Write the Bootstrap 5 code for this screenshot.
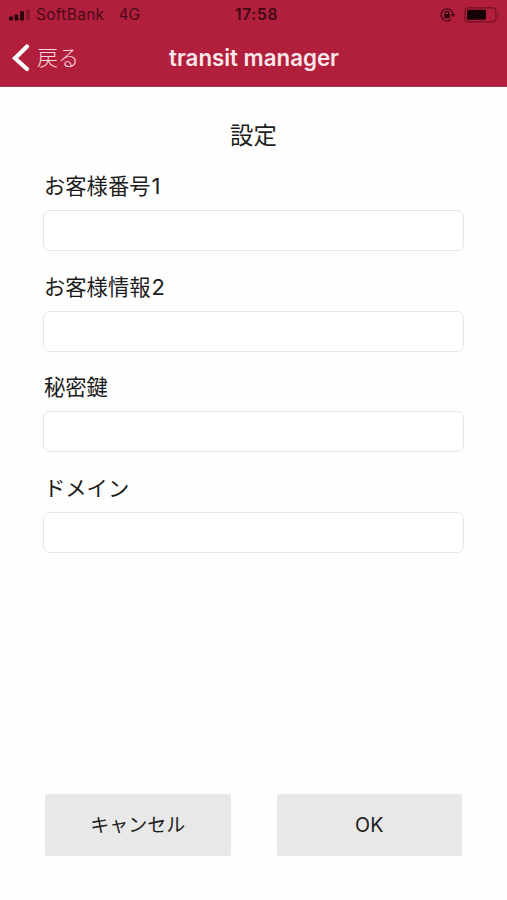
<!DOCTYPE html>
<html lang="ja">
<head>
<meta charset="utf-8">
<meta name="viewport" content="width=device-width, initial-scale=1">
<title>transit manager</title>
<link href="https://cdn.jsdelivr.net/npm/bootstrap@5.3.0/dist/css/bootstrap.min.css" rel="stylesheet">
<style>
  body { font-family: Inter, "Noto Sans CJK JP", sans-serif; background: #fefefe; color: #1c1c1c; }
  .app-head { background: #b21f3c; height: 87px; border-bottom: 1px solid #a8354a; }
  .status { height: 30px; color: #4a0a18; font-size: 15.5px; line-height: 30px; padding: 0 6px 0 8px; }
  .status-side { flex: 1 1 0; }
  .carrier { letter-spacing: .3px; }
  .network { margin-left: 14px; }
  .clock { font-weight: 600; font-size: 15.5px; letter-spacing: .7px; color: #3d0812; padding-left: 4px; }
  .titlebar { height: 56px; padding: 0 11px; line-height: 30px; color: #fbe6ea; }
  .title-side { flex: 1 1 0; }
  .back { color: #f9d5dc; font-size: 21px; line-height: 30px; }
  .back-text { padding-left: 2px; font-weight: 300; }
  .app-title { font-size: 22.3px; font-weight: 600; letter-spacing: 0; padding-left: 1px; }
  .settings { padding: 32px 43px 44px 43px; }
  .heading { font-size: 23.4px; line-height: 34px; }
  .fields { padding-top: 2px; }
  .field { height: 100.5px; }
  .field .form-label { font-size: 21.3px; line-height: 30px; height: 39px; padding-left: 1px; }
  .field .form-control { height: 41px; border: 1.5px solid #e6e6e6; border-radius: 7px; background: #fff; }
  .latin { font-size: 22px; padding-left: 1px; }
  .actions { gap: 46px; padding: 0 2px 0 2px; }
  .actions .btn { height: 62px; border-radius: 2px; background: #e8e8e8; color: #1c1c1c; font-size: 19px; padding-top: 8px; }
  .actions .ok { font-size: 19.7px; }
</style>
</head>
<body>
<div class="d-flex flex-column vh-100 overflow-hidden">
  <header class="app-head flex-shrink-0">
    <div class="status d-flex align-items-center">
      <div class="status-side d-flex align-items-center">
        <svg width="24" height="14" viewBox="0 0 24 14" fill="#2b040c">
          <rect x="1" y="8.5" width="4" height="4" rx="1"/>
          <rect x="6.5" y="6.5" width="4" height="6" rx="1"/>
          <rect x="12" y="3" width="4" height="9.5" rx="1"/>
          <rect x="18" y="1.5" width="4" height="11" rx="1" opacity=".3"/>
        </svg>
        <span class="carrier ms-1">SoftBank</span>
        <span class="network">4G</span>
      </div>
      <div class="clock">17:58</div>
      <div class="status-side d-flex align-items-center justify-content-end gap-2">
        <svg width="17" height="16" viewBox="0 0 17 16" fill="none" stroke="#4a0a18" stroke-width="1.4">
          <path d="M12.2 12.2A6 6 0 1 1 14 7.5"/>
          <path d="M11.7 7h4.6L14 10.2z" fill="#4a0a18" stroke="none"/>
          <rect x="5.2" y="7" width="5.6" height="4.2" rx=".6" fill="#2b040c" stroke="none"/>
          <path d="M6.3 7.2V6a1.7 1.7 0 0 1 3.4 0v1.2" stroke="#2b040c" stroke-width="1.2"/>
        </svg>
        <svg width="37" height="16" viewBox="0 0 37 16">
          <rect x="1" y=".8" width="31" height="14" rx="3.5" fill="none" stroke="#700f24" stroke-width="1.3"/>
          <rect x="3" y="2.8" width="19" height="10" rx="1.5" fill="#170006"/>
          <path d="M34 5.5q2 2.3 0 4.6z" fill="#700f24"/>
        </svg>
      </div>
    </div>
    <nav class="titlebar d-flex align-items-center">
      <div class="title-side d-flex">
        <a href="#" class="back d-flex align-items-center text-decoration-none">
          <svg width="20" height="30" viewBox="0 0 20 30" fill="none" stroke="#fff" stroke-width="4.2" stroke-linecap="round" stroke-linejoin="miter"><path d="M16 3.5L4 15.2L16 26"/></svg>
          <span class="back-text ms-1">戻る</span>
        </a>
      </div>
      <div class="app-title">transit manager</div>
      <div class="title-side"></div>
    </nav>
  </header>
  <main class="settings d-flex flex-column flex-grow-1">
    <h1 class="heading fw-normal text-center mb-0">設定</h1>
    <form class="fields mt-3">
      <div class="field"><label class="form-label d-block mb-0" for="no">お客様番号<span class="latin">1</span></label><input id="no" class="form-control"></div>
      <div class="field"><label class="form-label d-block mb-0" for="info">お客様情報<span class="latin">2</span></label><input id="info" class="form-control"></div>
      <div class="field"><label class="form-label d-block mb-0" for="key">秘密鍵</label><input id="key" class="form-control"></div>
      <div class="field"><label class="form-label d-block mb-0" for="domain">ドメイン</label><input id="domain" class="form-control"></div>
    </form>
    <div class="actions d-flex mt-auto">
      <button type="button" class="btn border-0 flex-fill w-50">キャンセル</button>
      <button type="button" class="btn ok border-0 flex-fill w-50">OK</button>
    </div>
  </main>
</div>
<script src="https://cdn.jsdelivr.net/npm/bootstrap@5.3.0/dist/js/bootstrap.bundle.min.js"></script>
</body>
</html>
